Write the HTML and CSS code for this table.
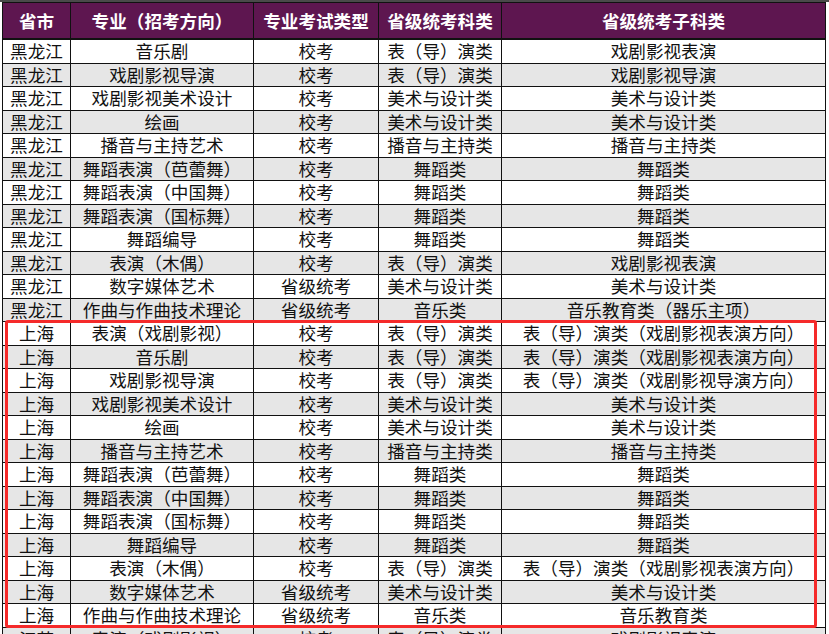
FILE: index.html
```html
<!DOCTYPE html>
<html lang="zh-CN">
<head>
<meta charset="utf-8">
<title>招考方向</title>
<link rel="stylesheet" href="styles.css">
</head>
<body>
<div class="sheet">
<table class="grid">
<colgroup>
<col class="c1"><col class="c2"><col class="c3"><col class="c4"><col class="c5">
</colgroup>
<thead>
<tr><th>省市</th><th>专业（招考方向）</th><th>专业考试类型</th><th>省级统考科类</th><th>省级统考子科类</th></tr>
</thead>
<tbody>
<tr><td>黑龙江</td><td>音乐剧</td><td>校考</td><td>表（导）演类</td><td>戏剧影视表演</td></tr>
<tr><td>黑龙江</td><td>戏剧影视导演</td><td>校考</td><td>表（导）演类</td><td>戏剧影视导演</td></tr>
<tr><td>黑龙江</td><td>戏剧影视美术设计</td><td>校考</td><td>美术与设计类</td><td>美术与设计类</td></tr>
<tr><td>黑龙江</td><td>绘画</td><td>校考</td><td>美术与设计类</td><td>美术与设计类</td></tr>
<tr><td>黑龙江</td><td>播音与主持艺术</td><td>校考</td><td>播音与主持类</td><td>播音与主持类</td></tr>
<tr><td>黑龙江</td><td>舞蹈表演（芭蕾舞）</td><td>校考</td><td>舞蹈类</td><td>舞蹈类</td></tr>
<tr><td>黑龙江</td><td>舞蹈表演（中国舞）</td><td>校考</td><td>舞蹈类</td><td>舞蹈类</td></tr>
<tr><td>黑龙江</td><td>舞蹈表演（国标舞）</td><td>校考</td><td>舞蹈类</td><td>舞蹈类</td></tr>
<tr><td>黑龙江</td><td>舞蹈编导</td><td>校考</td><td>舞蹈类</td><td>舞蹈类</td></tr>
<tr><td>黑龙江</td><td>表演（木偶）</td><td>校考</td><td>表（导）演类</td><td>戏剧影视表演</td></tr>
<tr><td>黑龙江</td><td>数字媒体艺术</td><td>省级统考</td><td>美术与设计类</td><td>美术与设计类</td></tr>
<tr><td>黑龙江</td><td>作曲与作曲技术理论</td><td>省级统考</td><td>音乐类</td><td>音乐教育类（器乐主项）</td></tr>
<tr><td>上海</td><td>表演（戏剧影视）</td><td>校考</td><td>表（导）演类</td><td>表（导）演类（戏剧影视表演方向）</td></tr>
<tr><td>上海</td><td>音乐剧</td><td>校考</td><td>表（导）演类</td><td>表（导）演类（戏剧影视表演方向）</td></tr>
<tr><td>上海</td><td>戏剧影视导演</td><td>校考</td><td>表（导）演类</td><td>表（导）演类（戏剧影视导演方向）</td></tr>
<tr><td>上海</td><td>戏剧影视美术设计</td><td>校考</td><td>美术与设计类</td><td>美术与设计类</td></tr>
<tr><td>上海</td><td>绘画</td><td>校考</td><td>美术与设计类</td><td>美术与设计类</td></tr>
<tr><td>上海</td><td>播音与主持艺术</td><td>校考</td><td>播音与主持类</td><td>播音与主持类</td></tr>
<tr><td>上海</td><td>舞蹈表演（芭蕾舞）</td><td>校考</td><td>舞蹈类</td><td>舞蹈类</td></tr>
<tr><td>上海</td><td>舞蹈表演（中国舞）</td><td>校考</td><td>舞蹈类</td><td>舞蹈类</td></tr>
<tr><td>上海</td><td>舞蹈表演（国标舞）</td><td>校考</td><td>舞蹈类</td><td>舞蹈类</td></tr>
<tr><td>上海</td><td>舞蹈编导</td><td>校考</td><td>舞蹈类</td><td>舞蹈类</td></tr>
<tr><td>上海</td><td>表演（木偶）</td><td>校考</td><td>表（导）演类</td><td>表（导）演类（戏剧影视表演方向）</td></tr>
<tr><td>上海</td><td>数字媒体艺术</td><td>省级统考</td><td>美术与设计类</td><td>美术与设计类</td></tr>
<tr><td>上海</td><td>作曲与作曲技术理论</td><td>省级统考</td><td>音乐类</td><td>音乐教育类</td></tr>
<tr><td>江苏</td><td>表演（戏剧影视）</td><td>校考</td><td>表（导）演类</td><td>戏剧影视表演</td></tr>
</tbody>
</table>
<div class="highlight"></div>
</div>
</body>
</html>
```

FILE: styles.css
```css
html, body {
  margin: 0;
  padding: 0;
  background: #ffffff;
  overflow: hidden;
}
.sheet {
  position: relative;
  width: 829px;
  height: 634px;
  border-top: 2px solid #4a4a4a;
  box-sizing: border-box;
  padding-left: 2px;
  font-family: "Noto Sans CJK SC", "Microsoft YaHei", sans-serif;
}
.grid {
  border-collapse: collapse;
  table-layout: fixed;
  width: 823px;
}
.c1 { width: 68px; }
.c2 { width: 183px; }
.c3 { width: 125px; }
.c4 { width: 123px; }
.c5 { width: 324px; }
.grid th,
.grid td {
  border: 1px solid #111111;
  padding: 0;
  text-align: center;
  vertical-align: middle;
  white-space: nowrap;
  overflow: hidden;
  line-height: 1;
}
.grid th {
  height: 35px;
  background: #5e1650;
  color: #ffffff;
  font-weight: bold;
  font-size: 17.6px;
  border-bottom: 2px solid #111111;
}
.grid td {
  height: 22.5px;
  font-size: 17.6px;
  color: #111111;
}
.grid tbody tr:nth-child(odd) td { background: #ffffff; }
.grid tbody tr:nth-child(even) td { background: #e6e6e6; }
.highlight {
  position: absolute;
  left: 5px;
  top: 318px;
  width: 812px;
  height: 308px;
  box-sizing: border-box;
  border: 3px solid #f52a2a;
  border-radius: 3px;
  pointer-events: none;
}
```
